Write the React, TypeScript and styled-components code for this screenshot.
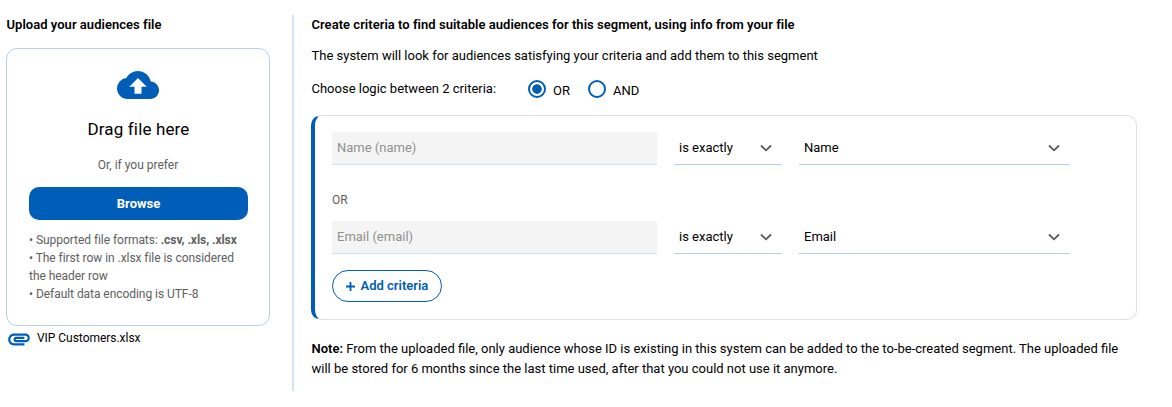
import React from "react";
import styled, { createGlobalStyle } from "styled-components";
import { MdAttachment, MdCloudUpload } from "react-icons/md";

const GlobalStyle = createGlobalStyle`
  *, *::before, *::after { box-sizing: border-box; }
  body {
    margin: 0;
    background: #fff;
    color: #000;
    font-family: Roboto, "Liberation Sans", sans-serif;
    font-size: 13px;
    line-height: 20px;
  }
  p, h2, ul { margin: 0; padding: 0; }
`;

const Page = styled.main`
  display: flex;
  height: 407px;
  padding: 15px 0 16px 6px;
`;

const UploadColumn = styled.section`
  width: 264px;
  flex: none;
`;

const Heading = styled.h2`
  padding-left: 0.5px;
  font-size: 13px;
  line-height: 20px;
  font-weight: 600;
  letter-spacing: 0.03px;
`;

const DropZone = styled.div`
  display: flex;
  flex-direction: column;
  align-items: center;
  height: 278px;
  margin-top: 13px;
  padding: 15px 21px 0 22px;
  border: 1px solid #b8cfe6;
  border-radius: 11px;
`;

const CloudIcon = styled(MdCloudUpload)`
  flex: none;
  width: 42px;
  height: 42px;
  margin-right: 1px;
  color: #005eb8;
`;

const DropTitle = styled.p`
  margin-top: 11px;
  font-size: 17px;
  line-height: 24px;
  letter-spacing: 0.15px;
`;

const DropHint = styled.p`
  margin-top: 14px;
  padding-right: 1px;
  font-size: 12px;
  line-height: 20px;
  color: #606060;
`;

const BrowseButton = styled.button`
  flex: none;
  width: 100%;
  height: 33px;
  margin-top: 12px;
  padding: 0;
  border: 0;
  border-radius: 10px;
  background: #005eb8;
  color: #fff;
  font: 700 13px/20px Roboto, sans-serif;
`;

const Rules = styled.ul`
  width: 100%;
  margin-top: 11px;
  list-style: none;
  font-size: 12px;
  line-height: 18px;
  letter-spacing: -0.05px;
  color: #606060;

  b { font-weight: 700; }
`;

const Attachment = styled.div`
  display: flex;
  align-items: center;
  gap: 5px;
  height: 26px;
  font-size: 12px;

  span {
    padding-bottom: 2px;
    letter-spacing: -0.03px;
  }

  svg {
    width: 26px;
    height: 26px;
    color: #005eb8;
  }
`;

const Divider = styled.div`
  flex: none;
  width: 2px;
  margin: 0 17px 0 22px;
  background: #d5e1f1;
`;

const CriteriaColumn = styled.section`
  width: 826px;
  flex: none;
`;

const Text = styled.p<{ $top: number }>`
  margin-top: ${(p) => p.$top}px;
  padding-left: 0.5px;

  b { font-weight: 600; }
`;

const LogicRow = styled.div`
  display: flex;
  align-items: center;
  height: 20px;
  margin-top: 13px;
  padding-left: 0.5px;
`;

const LogicLabel = styled.span`
  width: 216px;
`;

const Option = styled.label`
  display: flex;
  align-items: center;
  gap: 7.5px;
  width: 60px;

  span { padding-top: 3px; }
`;

const Radio = styled.i<{ $checked?: boolean }>`
  flex: none;
  width: 18px;
  height: 18px;
  border: 2px solid #005eb8;
  border-radius: 50%;
  background: ${(p) =>
    p.$checked ? "radial-gradient(circle, #005eb8 4.4px, #fff 5px)" : "#fff"};
`;

const Panel = styled.div`
  height: 205px;
  margin-top: 16px;
  padding: 16px 0 0 17px;
  border: 1px solid #e2e2e2;
  border-left: 4px solid #005eb8;
  border-radius: 10px;
`;

const CriteriaRow = styled.div`
  display: flex;
  gap: 17px;
`;

const Field = styled.div<{ $width: number }>`
  display: flex;
  align-items: center;
  justify-content: space-between;
  width: ${(p) => p.$width}px;
  height: 33px;
  padding: 0 10px 1px 5px;
  border-bottom: 1px solid #b4cfe8;
`;

const DisabledField = styled(Field)`
  background: #f4f4f4;
  border-bottom-color: #d3e1ef;
  color: #919191;
`;

const Joiner = styled.p`
  margin: 25px 0 11px;
  font-size: 12px;
  line-height: 20px;
  color: #606060;
`;

const AddButton = styled.button`
  display: flex;
  align-items: center;
  gap: 6px;
  width: 110px;
  height: 32px;
  margin-top: 16px;
  padding: 0 0 0 12.5px;
  border: 1px solid #005eb8;
  border-radius: 16px;
  background: #fff;
  color: #005eb8;
  font: 600 13px/20px Roboto, sans-serif;
  white-space: nowrap;
`;

const Chevron = () => (
  <svg width="12" height="8" viewBox="0 0 12 8" fill="none">
    <path d="M1 1.5 6 6.3 11 1.5" stroke="#595959" strokeWidth="1.8" />
  </svg>
);

const Plus = () => (
  <svg width="9" height="9" viewBox="0 0 9 9" fill="none">
    <path d="M4.5 0v9M0 4.5h9" stroke="currentColor" strokeWidth="1.8" />
  </svg>
);

const Criterion = ({ source, column }: { source: string; column: string }) => (
  <CriteriaRow>
    <DisabledField $width={325}>{source}</DisabledField>
    <Field $width={108}>
      {"is exactly"}
      <Chevron />
    </Field>
    <Field $width={271}>
      {column}
      <Chevron />
    </Field>
  </CriteriaRow>
);

export default function App() {
  return (
    <>
      <GlobalStyle />
      <Page>
        <UploadColumn>
          <Heading>Upload your audiences file</Heading>
          <DropZone>
            <CloudIcon />
            <DropTitle>Drag file here</DropTitle>
            <DropHint>Or, if you prefer</DropHint>
            <BrowseButton>Browse</BrowseButton>
            <Rules>
              <li>• Supported file formats: <b>.csv, .xls, .xlsx</b></li>
              <li>• The first row in .xlsx file is considered the header row</li>
              <li>• Default data encoding is UTF-8</li>
            </Rules>
          </DropZone>
          <Attachment>
            <MdAttachment />
            <span>VIP Customers.xlsx</span>
          </Attachment>
        </UploadColumn>
        <Divider />
        <CriteriaColumn>
          <Heading>
            Create criteria to find suitable audiences for this segment, using info from your file
          </Heading>
          <Text $top={11}>
            The system will look for audiences satisfying your criteria and add them to this segment
          </Text>
          <LogicRow>
            <LogicLabel>Choose logic between 2 criteria:</LogicLabel>
            <Option><Radio $checked /><span>OR</span></Option>
            <Option><Radio /><span>AND</span></Option>
          </LogicRow>
          <Panel>
            <Criterion source="Name (name)" column="Name" />
            <Joiner>OR</Joiner>
            <Criterion source="Email (email)" column="Email" />
            <AddButton><Plus />Add criteria</AddButton>
          </Panel>
          <Text $top={19}>
            <b>Note:</b> From the uploaded file, only audience whose ID is existing in this system can be
            added to the to-be-created segment. The uploaded file will be stored for 6 months since the
            last time used, after that you could not use it anymore.
          </Text>
        </CriteriaColumn>
      </Page>
    </>
  );
}
